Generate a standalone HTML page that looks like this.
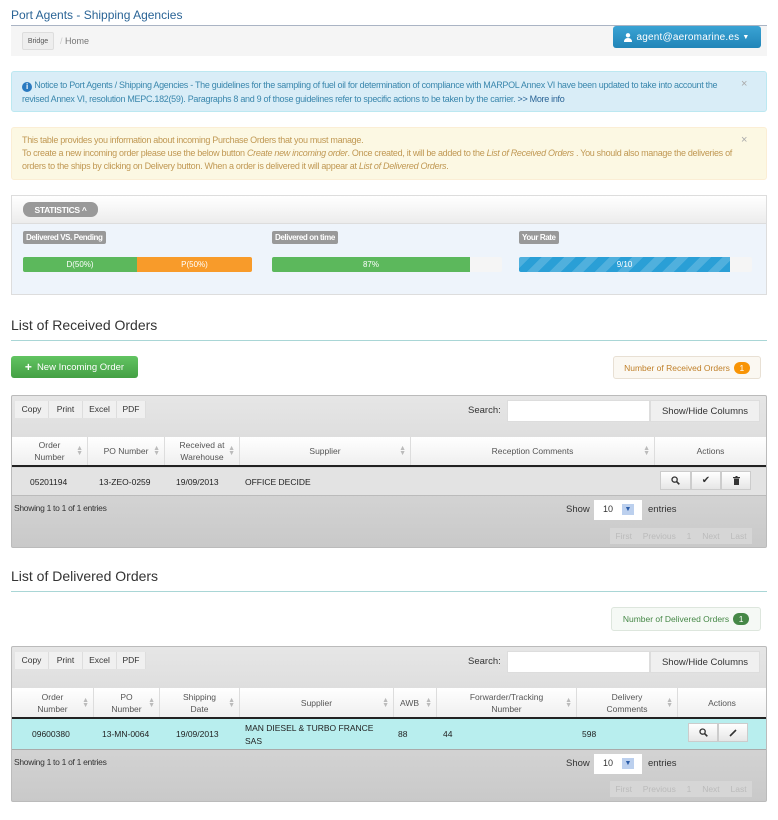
<!DOCTYPE html>
<html><head><meta charset="utf-8"><style>
*{box-sizing:border-box;margin:0;padding:0}
body{width:778px;height:820px;background:#fff;font-family:"Liberation Sans",sans-serif;font-size:9px;color:#333;position:relative;overflow:hidden}
.a{position:absolute}
.c{display:flex;align-items:center;justify-content:center;text-align:center}
.n{letter-spacing:-0.3px}
.lbl{background:#999;color:#fff;font-weight:bold;font-size:8px;padding:0 3px;height:13px;line-height:13px;border-radius:2px;letter-spacing:-0.4px}
.stripes{background:#2a9fd6;background-image:repeating-linear-gradient(135deg,rgba(255,255,255,.18) 0 8px,transparent 8px 16px)}
.wrap{background:linear-gradient(#e6e6e6,#c9c9c9);border:1px solid #bbb;border-radius:2px}
.tb{background:#f0f0f0;border-right:1px solid #ddd;height:17px;line-height:17px;text-align:center;font-size:8.5px}
.th{border-right:1px solid #ddd;font-size:8.5px;color:#555;line-height:12px}
.sort{position:absolute;right:4px;top:50%;margin-top:-5px;color:#bbb;font-size:7px;line-height:5px}
.btn{background:linear-gradient(#fff,#e6e6e6);border:1px solid #ccc;font-size:10px;color:#333}
.pg{color:#bbb;font-size:8.5px}
</style></head><body>

<div class="a" style="left:11px;top:8px;font-size:12px;color:#2a6496">Port Agents - Shipping Agencies</div>
<div class="a" style="left:11px;top:25px;width:756px;height:1px;background:#aab4c4"></div>
<div class="a" style="left:11px;top:26px;width:756px;height:30px;background:#f5f5f5"></div>
<div class="a c" style="left:22px;top:32px;width:32px;height:18px;border:1px solid #ddd;background:#eee;border-radius:2px;font-size:7px;color:#555">Bridge</div>
<div class="a" style="left:60px;top:36px;font-size:9px;color:#ccc">/ <span style="color:#777">Home</span></div>
<div class="a c" style="left:613px;top:26px;width:148px;height:22px;background:linear-gradient(#3aa3d4,#2185b8);border-radius:3px;color:#fff;font-size:10px;letter-spacing:.2px">
<svg width="8" height="9" viewBox="0 0 8 9" style="margin-right:4px"><circle cx="4" cy="2.3" r="2.2" fill="#fff"/><path d="M0 9 Q0 5 4 5 Q8 5 8 9Z" fill="#fff"/></svg>agent@aeromarine.es <span style="font-size:7px;margin-left:3px">▼</span></div>

<div class="a" style="left:11px;top:71px;width:756px;height:41px;background:#d9edf7;border:1px solid #bce8f1;border-radius:3px"></div>
<div class="a n" style="left:22px;top:78px;width:712px;color:#3a87ad;font-size:9px;line-height:14px"><span style="display:inline-block;width:10px;height:10px;border-radius:50%;background:#2a7ac0;color:#fff;font-size:8px;line-height:10px;text-align:center;font-weight:bold;vertical-align:-1px">i</span> Notice to Port Agents / Shipping Agencies - The guidelines for the sampling of fuel oil for determination of compliance with MARPOL Annex VI have been updated to take into account the revised Annex VI, resolution MEPC.182(59). Paragraphs 8 and 9 of those guidelines refer to specific actions to be taken by the carrier. <span style="color:#2a6496">&gt;&gt; More info</span></div>
<div class="a" style="left:741px;top:78px;color:#aaa;font-size:11px">×</div>

<div class="a" style="left:11px;top:127px;width:756px;height:53px;background:#fcf8e3;border:1px solid #fbeed5;border-radius:3px"></div>
<div class="a n" style="left:22px;top:134px;width:715px;color:#c09853;font-size:9px;line-height:13px">This table provides you information about incoming Purchase Orders that you must manage.<br>To create a new incoming order please use the below button <i>Create new incoming order</i>. Once created, it will be added to the <i>List of Received Orders</i> . You should also manage the deliveries of orders to the ships by clicking on Delivery button. When a order is delivered it will appear at <i>List of Delivered Orders</i>.</div>
<div class="a" style="left:741px;top:134px;color:#aaa;font-size:11px">×</div>

<div class="a" style="left:11px;top:195px;width:756px;height:100px;border:1px solid #ddd;background:#eef4fb"></div>
<div class="a" style="left:12px;top:196px;width:754px;height:28px;background:linear-gradient(#fff,#ececec);border-bottom:1px solid #ddd"></div>
<div class="a c" style="left:23px;top:202px;width:75px;height:15px;background:#999;border-radius:7px;color:#fff;font-weight:bold;font-size:8.5px;letter-spacing:-0.3px">STATISTICS ^</div>
<div class="a lbl" style="left:23px;top:231px">Delivered VS. Pending</div>
<div class="a lbl" style="left:272px;top:231px">Delivered on time</div>
<div class="a lbl" style="left:519px;top:231px">Your Rate</div>
<div class="a" style="left:23px;top:257px;width:229px;height:15px;background:#f5f5f5;border-radius:2px;overflow:hidden;display:flex;color:#fff;font-size:8px">
<div class="c" style="width:114px;background:#5cb85c">D(50%)</div><div class="c" style="width:115px;background:#f89b2a">P(50%)</div></div>
<div class="a" style="left:272px;top:257px;width:230px;height:15px;background:#f5f5f5;border-radius:2px;overflow:hidden;color:#fff;font-size:8px"><div class="c" style="width:198px;height:15px;background:#5cb85c">87%</div></div>
<div class="a" style="left:519px;top:257px;width:233px;height:15px;background:#f5f5f5;border-radius:2px;overflow:hidden;color:#fff;font-size:8px"><div class="c stripes" style="width:211px;height:15px">9/10</div></div>

<div class="a" style="left:11px;top:317px;font-size:14px;color:#333">List of Received Orders</div>
<div class="a" style="left:11px;top:340px;width:756px;height:1px;background:#a9d6d6"></div>
<div class="a c" style="left:11px;top:356px;width:127px;height:22px;background:linear-gradient(#62c462,#44a044);border-radius:3px;color:#fff;font-size:9.5px"><b style="font-size:12px;margin-right:5px">+</b>New Incoming Order</div>
<div class="a c" style="left:613px;top:356px;width:148px;height:23px;background:#fbf8f2;border:1px solid #e8e0d4;border-radius:3px;color:#c0802a;font-size:8.5px">Number of Received Orders <span style="display:inline-block;margin-left:4px;width:16px;height:12px;border-radius:6px;background:#f89406;color:#fff;line-height:12px">1</span></div>

<div class="a wrap" style="left:11px;top:395px;width:756px;height:153px"></div>
<div class="a" style="left:15px;top:401px;display:flex"><div class="tb" style="width:34px">Copy</div><div class="tb" style="width:34px">Print</div><div class="tb" style="width:34px">Excel</div><div class="tb" style="width:29px">PDF</div></div>
<div class="a" style="left:468px;top:405px;font-size:9.5px">Search:</div>
<div class="a" style="left:507px;top:400px;width:143px;height:22px;background:#fff;border:1px solid #ddd"></div>
<div class="a c" style="left:650px;top:400px;width:110px;height:22px;background:#f0f0f0;border:1px solid #ddd;font-size:9.5px">Show/Hide Columns</div>
<div class="a" style="left:12px;top:437px;width:754px;height:30px;background:linear-gradient(#fff,#efefef);border-bottom:2px solid #222;display:flex">
<div class="th c" style="width:76px;position:relative">Order<br>Number<span class="sort">▲<br>▼</span></div>
<div class="th c" style="width:77px;position:relative">PO Number<span class="sort">▲<br>▼</span></div>
<div class="th c" style="width:75px;position:relative">Received at<br>Warehouse<span class="sort">▲<br>▼</span></div>
<div class="th c" style="width:171px;position:relative">Supplier<span class="sort">▲<br>▼</span></div>
<div class="th c" style="width:244px;position:relative">Reception Comments<span class="sort">▲<br>▼</span></div>
<div class="th c" style="width:111px;border:0">Actions</div></div>
<div class="a" style="left:12px;top:468px;width:754px;height:28px;background:#e3e3e3;border-bottom:1px solid #bbb;font-size:8.5px;color:#222">
<div class="a" style="left:18px;top:9px">05201194</div><div class="a" style="left:87px;top:9px">13-ZEO-0259</div><div class="a" style="left:164px;top:9px">19/09/2013</div><div class="a" style="left:233px;top:9px">OFFICE DECIDE</div>
<div class="a" style="left:648px;top:3px;display:flex"><div class="btn c" style="width:31px;height:19px"><svg width="9" height="9" viewBox="0 0 9 9"><circle cx="3.6" cy="3.6" r="2.6" fill="none" stroke="#333" stroke-width="1.3"/><path d="M5.5 5.5L8.3 8.3" stroke="#333" stroke-width="1.6"/></svg></div><div class="btn c" style="width:30px;height:19px">✔</div><div class="btn c" style="width:30px;height:19px"><svg width="7" height="9" viewBox="0 0 7 9"><rect x="0" y="1" width="7" height="1.2" fill="#333"/><rect x="2.5" y="0" width="2" height="1" fill="#333"/><rect x="1" y="2.6" width="5" height="6.4" fill="#333"/></svg></div></div></div>
<div class="a n" style="left:14px;top:503px;font-size:8.5px">Showing 1 to 1 of 1 entries</div>
<div class="a" style="left:566px;top:504px;font-size:9.5px">Show</div>
<div class="a" style="left:594px;top:500px;width:48px;height:20px;background:#fff;font-size:9px;padding:4px 0 0 9px">10<span style="position:absolute;left:28px;top:4px;width:12px;height:11px;background:#bcd0ee;color:#2a5ca8;font-size:7px;text-align:center;line-height:11px">▼</span></div>
<div class="a" style="left:648px;top:504px;font-size:9.5px">entries</div>
<div class="a pg" style="left:610px;top:528px;width:142px;height:16px;background:#d6d6d6;display:flex;justify-content:space-around;align-items:center"><span>First</span><span>Previous</span><span>1</span><span>Next</span><span>Last</span></div>

<div class="a" style="left:11px;top:568px;font-size:14px;color:#333">List of Delivered Orders</div>
<div class="a" style="left:11px;top:591px;width:756px;height:1px;background:#a9d6d6"></div>
<div class="a c" style="left:611px;top:607px;width:150px;height:24px;background:#f5f9f5;border:1px solid #dde6dd;border-radius:3px;color:#468847;font-size:8.5px">Number of Delivered Orders <span style="display:inline-block;margin-left:4px;width:16px;height:12px;border-radius:6px;background:#468847;color:#fff;line-height:12px">1</span></div>

<div class="a wrap" style="left:11px;top:646px;width:756px;height:156px"></div>
<div class="a" style="left:15px;top:652px;display:flex"><div class="tb" style="width:34px">Copy</div><div class="tb" style="width:34px">Print</div><div class="tb" style="width:34px">Excel</div><div class="tb" style="width:29px">PDF</div></div>
<div class="a" style="left:468px;top:656px;font-size:9.5px">Search:</div>
<div class="a" style="left:507px;top:651px;width:143px;height:22px;background:#fff;border:1px solid #ddd"></div>
<div class="a c" style="left:650px;top:651px;width:110px;height:22px;background:#f0f0f0;border:1px solid #ddd;font-size:9.5px">Show/Hide Columns</div>
<div class="a" style="left:12px;top:688px;width:754px;height:31px;background:linear-gradient(#fff,#efefef);border-bottom:2px solid #222;display:flex">
<div class="th c" style="width:82px;position:relative">Order<br>Number<span class="sort">▲<br>▼</span></div>
<div class="th c" style="width:66px;position:relative">PO<br>Number<span class="sort">▲<br>▼</span></div>
<div class="th c" style="width:80px;position:relative">Shipping<br>Date<span class="sort">▲<br>▼</span></div>
<div class="th c" style="width:154px;position:relative">Supplier<span class="sort">▲<br>▼</span></div>
<div class="th c" style="width:43px;position:relative;justify-content:flex-start;padding-left:6px">AWB<span class="sort">▲<br>▼</span></div>
<div class="th c" style="width:140px;position:relative">Forwarder/Tracking<br>Number<span class="sort">▲<br>▼</span></div>
<div class="th c" style="width:101px;position:relative">Delivery<br>Comments<span class="sort">▲<br>▼</span></div>
<div class="th c" style="width:88px;border:0">Actions</div></div>
<div class="a" style="left:12px;top:719px;width:754px;height:31px;background:#b8eeee;border-bottom:1px solid #aaa;font-size:8.5px;color:#222">
<div class="a" style="left:20px;top:10px">09600380</div><div class="a" style="left:90px;top:10px">13-MN-0064</div><div class="a" style="left:164px;top:10px">19/09/2013</div><div class="a" style="left:233px;top:3px;line-height:13px">MAN DIESEL &amp; TURBO FRANCE<br>SAS</div>
<div class="a" style="left:386px;top:10px">88</div><div class="a" style="left:431px;top:10px">44</div><div class="a" style="left:570px;top:10px">598</div>
<div class="a" style="left:676px;top:4px;display:flex"><div class="btn c" style="width:30px;height:19px"><svg width="9" height="9" viewBox="0 0 9 9"><circle cx="3.6" cy="3.6" r="2.6" fill="none" stroke="#333" stroke-width="1.3"/><path d="M5.5 5.5L8.3 8.3" stroke="#333" stroke-width="1.6"/></svg></div><div class="btn c" style="width:30px;height:19px"><svg width="8" height="8" viewBox="0 0 8 8"><path d="M1 7L7 1" stroke="#333" stroke-width="1.6"/></svg></div></div></div>
<div class="a n" style="left:14px;top:757px;font-size:8.5px">Showing 1 to 1 of 1 entries</div>
<div class="a" style="left:566px;top:758px;font-size:9.5px">Show</div>
<div class="a" style="left:594px;top:754px;width:48px;height:20px;background:#fff;font-size:9px;padding:4px 0 0 9px">10<span style="position:absolute;left:28px;top:4px;width:12px;height:11px;background:#bcd0ee;color:#2a5ca8;font-size:7px;text-align:center;line-height:11px">▼</span></div>
<div class="a" style="left:648px;top:758px;font-size:9.5px">entries</div>
<div class="a pg" style="left:610px;top:781px;width:142px;height:16px;background:#d6d6d6;display:flex;justify-content:space-around;align-items:center"><span>First</span><span>Previous</span><span>1</span><span>Next</span><span>Last</span></div>
</body></html>
